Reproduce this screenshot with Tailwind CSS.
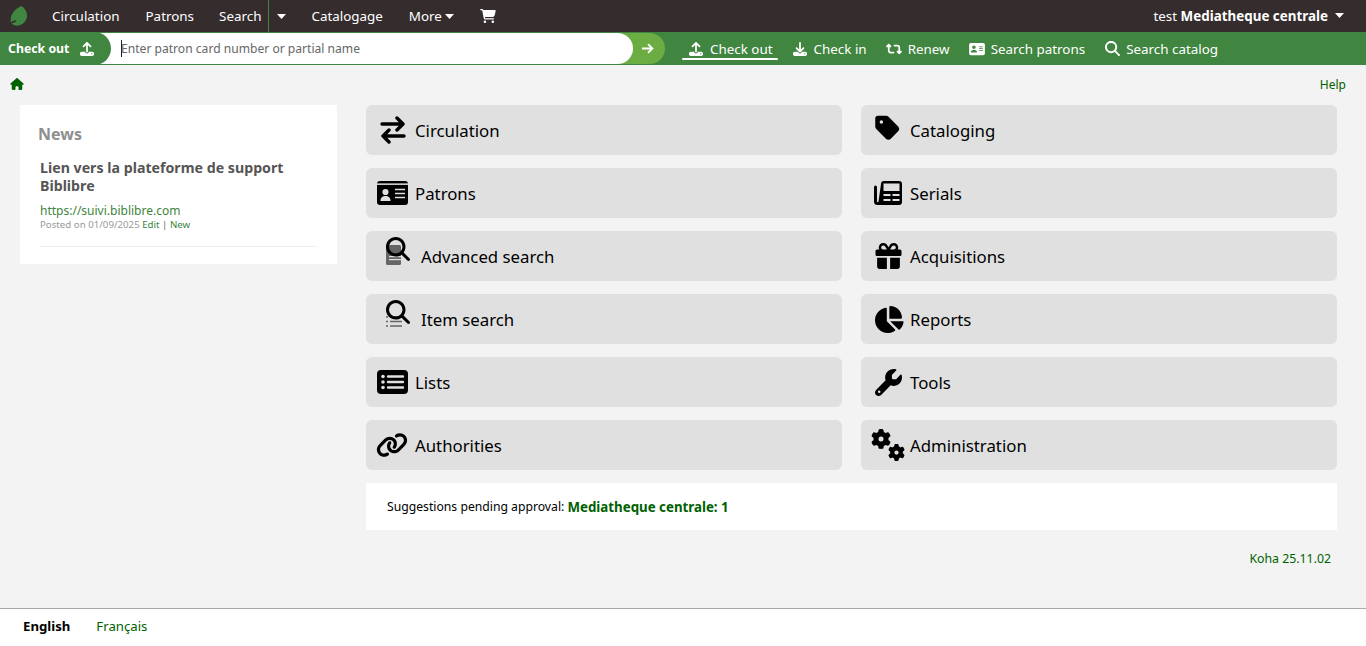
<!DOCTYPE html>
<html lang="en">
<head>
<meta charset="UTF-8">
<title>Koha staff interface</title>
<script src="https://cdn.jsdelivr.net/npm/@tailwindcss/browser@4"></script>
</head>
<body class="bg-[#f3f3f3] font-['Noto_Sans',sans-serif] text-[14px] text-black">
<div class="flex h-[646px] flex-col overflow-hidden">

  <!-- top nav -->
  <nav class="flex h-[32px] shrink-0 items-center bg-[#352c2e] text-[13.4px] text-white">
    <svg class="ml-[10px] h-[20px] w-[18px]" viewBox="0 0 18 20"><path fill="#408540" d="M11.500 0C15.500 2.500 17.500 6.500 17 10.500C16.500 15.500 12.500 19 8.500 19.500C5.500 20 3 19 1.500 17.500C3.500 17 5.500 16.500 6.500 14.500C5 14 3 15 1 16.500C-0.500 11 3 3.500 11.500 0Z"/></svg>
    <a class="ml-[24px]">Circulation</a>
    <a class="ml-[26px]">Patrons</a>
    <div class="ml-[25px] flex h-full items-center border-r border-[#408540] pr-[7px]">Search</div>
    <svg class="ml-[8px] h-[5px] w-[9px]" viewBox="0 0 9 5"><path fill="#fff" d="M0 0h9L4.500 5z"/></svg>
    <a class="ml-[25px]">Catalogage</a>
    <a class="ml-[26px]">More</a>
    <svg class="ml-[3px] h-[5px] w-[9px]" viewBox="0 0 9 5"><path fill="#fff" d="M0 0h9L4.500 5z"/></svg>
    <svg class="ml-[26px] h-[14px] w-[16px] fill-white" viewBox="0 0 576 512"><path d="M0 24C0 10.700 10.700 0 24 0H69.500c22 0 41.500 12.800 50.600 32h411c26.300 0 45.500 25 38.600 50.400l-41 152.300c-8.500 31.400-37 53.300-69.500 53.300H170.700l5.400 28.500c2.200 11.300 12.100 19.500 23.600 19.500H488c13.300 0 24 10.700 24 24s-10.700 24-24 24H199.700c-34.600 0-64.300-24.600-70.700-58.500L77.400 54.500c-.7-3.800-4-6.500-7.900-6.500H24C10.700 48 0 37.300 0 24zM128 464a48 48 0 1 1 96 0 48 48 0 1 1 -96 0zm336-48a48 48 0 1 1 0 96 48 48 0 1 1 0-96z"/></svg>
    <div class="ml-auto mr-[22px] flex items-center">
      <span>test <b class="font-bold">Mediatheque centrale</b></span>
      <svg class="ml-[7px] h-[5px] w-[9px]" viewBox="0 0 9 5"><path fill="#fff" d="M0 0h9L4.500 5z"/></svg>
    </div>
  </nav>

  <!-- check out bar -->
  <div class="flex h-[33px] shrink-0 items-center bg-[#408540] text-[13.4px] text-white">
    <div class="relative z-20 flex h-full w-[111px] items-center rounded-r-[17px] bg-[#408540] pl-[8px] text-[12.3px] font-bold">
      <span class="pt-[2px]">Check out</span>
      <svg class="ml-[11px] h-[14px] w-[14px] fill-white" viewBox="0 0 512 512"><path d="M288 109.300V352c0 17.700-14.300 32-32 32s-32-14.300-32-32V109.300l-73.400 73.400c-12.500 12.500-32.800 12.500-45.300 0s-12.500-32.800 0-45.300l128-128c12.500-12.500 32.800-12.500 45.300 0l128 128c12.500 12.500 12.500 32.800 0 45.300s-32.800 12.500-45.300 0L288 109.300zM64 352H192c0 35.300 28.700 64 64 64s64-28.700 64-64H448c35.300 0 64 28.700 64 64v32c0 35.300-28.700 64-64 64H64c-35.300 0-64-28.700-64-64V416c0-35.300 28.700-64 64-64zM432 456a24 24 0 1 0 0-48 24 24 0 1 0 0 48z"/></svg>
    </div>
    <div class="relative z-10 ml-[-17px] flex h-[31px] w-[539px] items-center rounded-r-[16px] bg-white pl-[27px]">
      <span class="h-[17px] w-px shrink-0 bg-[#222]"></span>
      <input class="ml-[-1px] w-full bg-transparent pt-[2px] text-[12.1px] text-[#555] outline-none placeholder:text-[#666]" placeholder="Enter patron card number or partial name">
    </div>
    <div class="ml-[-16px] flex h-[31px] w-[48px] items-center justify-end rounded-r-[16px] bg-[#6cad43] pr-[11px]">
      <svg class="h-[13px] w-[13px] stroke-white" viewBox="0 0 12 12" fill="none" stroke-width="1.700"><path d="M1 6h9.500M6.500 2l4 4-4 4"/></svg>
    </div>
    <div class="ml-[17px] flex h-full items-center pt-[1px]">
      <a class="relative flex h-full items-center pl-[7px] pr-[5px]">
        <svg class="mr-[7px] h-[14px] w-[14px] fill-white" viewBox="0 0 512 512"><path d="M288 109.300V352c0 17.700-14.300 32-32 32s-32-14.300-32-32V109.300l-73.400 73.400c-12.500 12.500-32.800 12.500-45.300 0s-12.500-32.800 0-45.300l128-128c12.500-12.500 32.800-12.500 45.300 0l128 128c12.500 12.500 12.500 32.800 0 45.300s-32.800 12.500-45.300 0L288 109.300zM64 352H192c0 35.300 28.700 64 64 64s64-28.700 64-64H448c35.300 0 64 28.700 64 64v32c0 35.300-28.700 64-64 64H64c-35.300 0-64-28.700-64-64V416c0-35.300 28.700-64 64-64zM432 456a24 24 0 1 0 0-48 24 24 0 1 0 0 48z"/></svg>
        Check out
        <span class="absolute bottom-[5px] left-0 right-0 h-[2px] rounded-full bg-white"></span>
      </a>
      <a class="ml-[15px] flex items-center">
        <svg class="mr-[7px] h-[14px] w-[14px] fill-white" viewBox="0 0 512 512"><path d="M288 32c0-17.700-14.300-32-32-32s-32 14.300-32 32V274.700l-73.400-73.400c-12.500-12.500-32.800-12.500-45.300 0s-12.500 32.800 0 45.300l128 128c12.500 12.500 32.800 12.500 45.300 0l128-128c12.500-12.500 12.500-32.800 0-45.300s-32.800-12.500-45.300 0L288 274.700V32zM64 352c-35.300 0-64 28.700-64 64v32c0 35.300 28.700 64 64 64H448c35.300 0 64-28.700 64-64V416c0-35.300-28.700-64-64-64H346.500l-45.300 45.300c-25 25-65.500 25-90.500 0L165.500 352H64zm368 56a24 24 0 1 1 0 48 24 24 0 1 1 0-48z"/></svg>
        Check in
      </a>
      <a class="ml-[19px] flex items-center">
        <svg class="mr-[6px] h-[14px] w-[16px] fill-white" viewBox="0 0 576 512"><path d="M272 416c17.700 0 32-14.300 32-32s-14.300-32-32-32H160c-17.700 0-32-14.300-32-32V192h32c12.900 0 24.600-7.800 29.600-19.800s2.200-25.700-6.900-34.900l-64-64c-12.500-12.500-32.800-12.500-45.300 0l-64 64c-9.200 9.200-11.900 22.900-6.900 34.900s16.600 19.800 29.600 19.800l32 0 0 128c0 53 43 96 96 96H272zM304 96c-17.700 0-32 14.300-32 32s14.300 32 32 32l112 0c17.700 0 32 14.300 32 32l0 128H416c-12.900 0-24.600 7.800-29.600 19.800s-2.200 25.700 6.900 34.900l64 64c12.500 12.500 32.800 12.500 45.300 0l64-64c9.200-9.200 11.900-22.900 6.900-34.900s-16.600-19.800-29.600-19.800l-32 0V192c0-53-43-96-96-96L304 96z"/></svg>
        Renew
      </a>
      <a class="ml-[19px] flex items-center">
        <svg class="mr-[6px] h-[14px] w-[16px] fill-white" viewBox="0 0 576 512"><path d="M64 32C28.700 32 0 60.700 0 96V416c0 35.300 28.700 64 64 64H512c35.300 0 64-28.700 64-64V96c0-35.300-28.700-64-64-64H64zm80 256h64c44.200 0 80 35.800 80 80c0 8.800-7.200 16-16 16H80c-8.800 0-16-7.200-16-16c0-44.200 35.800-80 80-80zm-32-96a64 64 0 1 1 128 0 64 64 0 1 1 -128 0zm256-32H496c8.800 0 16 7.200 16 16s-7.200 16-16 16H368c-8.800 0-16-7.200-16-16s7.200-16 16-16zm0 64H496c8.800 0 16 7.200 16 16s-7.200 16-16 16H368c-8.800 0-16-7.200-16-16s7.200-16 16-16zm0 64H496c8.800 0 16 7.200 16 16s-7.200 16-16 16H368c-8.800 0-16-7.200-16-16s7.200-16 16-16z"/></svg>
        Search patrons
      </a>
      <a class="ml-[20px] flex items-center">
        <svg class="mr-[6px] h-[15px] w-[15px] fill-white" viewBox="0 0 512 512"><path d="M416 208c0 45.900-14.900 88.300-40 122.700L502.600 457.400c12.500 12.500 12.500 32.800 0 45.300s-32.800 12.500-45.300 0L330.700 376c-34.400 25.200-76.800 40-122.700 40C93.100 416 0 322.900 0 208S93.100 0 208 0S416 93.100 416 208zM208 352a144 144 0 1 0 0-288 144 144 0 1 0 0 288z"/></svg>
        Search catalog
      </a>
    </div>
  </div>

  <!-- breadcrumb row -->
  <div class="flex h-[40px] shrink-0 items-center justify-between pl-[10px] pr-[20px]">
    <svg class="mb-[2px] h-[12px] w-[14px] fill-[#006100]" viewBox="0 0 576 512"><path d="M575.800 255.500c0 18-15 32.100-32 32.100h-32l.7 160.200c0 2.700-.2 5.400-.5 8.100V472c0 22.100-17.900 40-40 40H456c-1.100 0-2.200 0-3.300-.1c-1.400 .1-2.800 .1-4.200 .1H416 392c-22.100 0-40-17.900-40-40V448 384c0-17.700-14.300-32-32-32H256c-17.700 0-32 14.300-32 32v64 24c0 22.100-17.900 40-40 40H160 128.100c-1.500 0-3-.1-4.500-.2c-1.200 .1-2.400 .2-3.600 .2H104c-22.100 0-40-17.900-40-40V360c0-.9 0-1.900 .1-2.800V287.600H32c-18 0-32-14-32-32.100c0-9 3-17 10-24L266.400 8c7-7 15-8 22-8s15 2 21 7L564.800 231.500c8 7 12 15 11 24z"/></svg>
    <a class="text-[12px] text-[#006100]">Help</a>
  </div>

  <!-- main -->
  <main class="flex flex-1 pl-[20px]">
    <section class="h-[159px] w-[317px] shrink-0 bg-white px-[18px] pt-[18px]">
      <h3 class="text-[16px] font-bold leading-[22px] text-[#8f8f8f]">News</h3>
      <div class="mx-[2px] mt-[14px] border-b border-[#eee] pb-[15px]">
        <h4 class="text-[14.2px] font-bold leading-[18px] text-[#555]">Lien vers la plateforme de support Biblibre</h4>
        <a class="mt-[7px] block text-[12px] leading-[17px] text-[#408540]">https://suivi.biblibre.com</a>
        <p class="text-[9.7px] leading-[12px] text-[#999]">Posted on 01/09/2025 <a class="text-[#408540]">Edit</a> <span class="text-[#666]">|</span> <a class="text-[#408540]">New</a></p>
      </div>
    </section>

    <div class="ml-[29px] w-[971px]">
      <div class="grid grid-cols-2 gap-x-[19px] gap-y-[13px] text-[16.8px] leading-none">
        <a class="flex h-[50px] items-center rounded-[6px] bg-[#e0e0e0]">
          <svg class="ml-[14px] mr-[9px] mt-[-1px] h-[28px] w-[26px]" viewBox="0 0 26 28" fill="none" stroke="#000" stroke-width="3.400" stroke-linecap="round" stroke-linejoin="round"><path d="M2 8h21M17 2l6 6-6 6M24 20H3M9 14l-6 6 6 6"/></svg>
          <span class="pt-[2px]">Circulation</span>
        </a>
        <a class="flex h-[50px] items-center rounded-[6px] bg-[#e0e0e0]">
          <svg class="ml-[14px] mr-[10px] mt-[-4px] h-[28px] w-[25px] fill-black" viewBox="0 0 448 512"><path d="M0 80V229.500c0 17 6.700 33.300 18.700 45.300l176 176c25 25 65.500 25 90.500 0L418.700 317.300c25-25 25-65.500 0-90.500l-176-176c-12-12-28.300-18.700-45.300-18.700H48C21.500 32 0 53.500 0 80zm112 32a32 32 0 1 1 0 64 32 32 0 1 1 0-64z"/></svg>
          <span class="pt-[2px]">Cataloging</span>
        </a>
        <a class="flex h-[50px] items-center rounded-[6px] bg-[#e0e0e0]">
          <svg class="ml-[11px] mr-[7px] h-[24px] w-[31px]" viewBox="0 0 31 24"><rect width="31" height="24" rx="3" fill="#000"/><rect y="2.400" width="31" height="1.500" fill="#e0e0e0"/><circle cx="8.500" cy="11" r="3.100" fill="#e0e0e0"/><path d="M3.500 20c0-3.500 1.800-5 5-5s5 1.500 5 5z" fill="#e0e0e0"/><path d="M18 8.500h10M18 12.500h10M18 16.500h10" stroke="#e0e0e0" stroke-width="1.700"/></svg>
          <span class="pt-[2px]">Patrons</span>
        </a>
        <a class="flex h-[50px] items-center rounded-[6px] bg-[#e0e0e0]">
          <svg class="ml-[13px] mr-[8px] h-[24px] w-[28px]" viewBox="0 0 28 24"><path fill="#000" d="M7 3a3 3 0 0 1 3-3h15a3 3 0 0 1 3 3v18a3 3 0 0 1-3 3H3.500A3.500 3.500 0 0 1 0 20.500V6a1.500 1.500 0 0 1 3 0v14.500a.75.750 0 0 0 1.500 0Z"/><path fill="#e0e0e0" d="M9.500 2.500h16v7.500h-16zM9.500 13h7v2h-7zM9.500 18h7v2h-7zM18.500 13h7v2h-7zM18.500 18h7v2h-7z"/></svg>
          <span class="pt-[2px]">Serials</span>
        </a>
        <a class="flex h-[50px] items-center rounded-[6px] bg-[#e0e0e0]">
          <span class="relative ml-[20px] mr-[9px] mt-[-8px] h-[30px] w-[26px]">
            <svg class="absolute left-0 top-[8px] h-[20px] w-[15px]" viewBox="0 0 15 20"><rect width="15" height="20" rx="1.500" fill="#666"/><rect x="3" y="11" width="12" height="1.200" fill="#e0e0e0"/><rect x="3" y="14" width="12" height="1.200" fill="#e0e0e0"/></svg>
            <svg class="absolute left-0 top-0 h-[24px] w-[24px] fill-black" viewBox="0 0 512 512"><path d="M416 208c0 45.900-14.900 88.300-40 122.700L502.600 457.400c12.500 12.500 12.500 32.800 0 45.300s-32.800 12.500-45.300 0L330.700 376c-34.400 25.200-76.800 40-122.700 40C93.100 416 0 322.900 0 208S93.100 0 208 0S416 93.100 416 208zM208 352a144 144 0 1 0 0-288 144 144 0 1 0 0 288z"/></svg>
          </span>
          <span class="pt-[2px]">Advanced search</span>
        </a>
        <a class="flex h-[50px] items-center rounded-[6px] bg-[#e0e0e0]">
          <svg class="ml-[14px] mr-[8px] h-[26px] w-[27px] fill-black" viewBox="0 0 512 512"><path d="M190.500 68.800L225.300 128H224 152c-22.100 0-40-17.900-40-40s17.900-40 40-40h2.200c14.900 0 28.800 7.900 36.300 20.800zM64 88c0 14.400 3.500 28 9.600 40H32c-17.700 0-32 14.300-32 32v64c0 17.700 14.300 32 32 32H480c17.700 0 32-14.300 32-32V160c0-17.700-14.300-32-32-32H438.400c6.100-12 9.600-25.600 9.600-40c0-48.600-39.400-88-88-88h-2.200c-31.900 0-61.500 16.900-77.700 44.400L256 85.500l-24.100-41C215.700 16.900 186.100 0 154.200 0H152C103.400 0 64 39.400 64 88zm336 0c0 22.100-17.900 40-40 40H288h-1.300l34.800-59.200C329.100 55.900 342.900 48 357.800 48H360c22.100 0 40 17.900 40 40zM32 288V464c0 26.500 21.500 48 48 48H224V288H32zM288 512H432c26.500 0 48-21.500 48-48V288H288V512z"/></svg>
          <span class="pt-[2px]">Acquisitions</span>
        </a>
        <a class="flex h-[50px] items-center rounded-[6px] bg-[#e0e0e0]">
          <span class="relative ml-[20px] mr-[9px] mt-[-8px] h-[30px] w-[26px]">
            <svg class="absolute left-0 top-[14px] h-[14px] w-[16px]" viewBox="0 0 16 14"><path d="M0 3h2M4 3h12M0 7.500h2M4 7.500h12M0 12h2M4 12h12" stroke="#666" stroke-width="1.600"/></svg>
            <svg class="absolute left-0 top-0 h-[24px] w-[24px] fill-black" viewBox="0 0 512 512"><path d="M416 208c0 45.900-14.900 88.300-40 122.700L502.600 457.400c12.500 12.500 12.500 32.800 0 45.300s-32.800 12.500-45.300 0L330.700 376c-34.400 25.200-76.800 40-122.700 40C93.100 416 0 322.900 0 208S93.100 0 208 0S416 93.100 416 208zM208 352a144 144 0 1 0 0-288 144 144 0 1 0 0 288z"/></svg>
          </span>
          <span class="pt-[2px]">Item search</span>
        </a>
        <a class="flex h-[50px] items-center rounded-[6px] bg-[#e0e0e0]">
          <svg class="ml-[12px] mr-[6px] h-[27px] w-[31px] fill-black" viewBox="0 0 576 512"><path d="M304 240V16.600c0-9 7-16.600 16-16.600C443.700 0 544 100.300 544 224c0 9-7.600 16-16.600 16H304zM32 272C32 150.700 122.100 50.300 239 34.300c9.200-1.300 17 6.100 17 15.400V288L412.500 444.500c6.700 6.700 6.200 17.700-1.500 23.100C371.800 495.600 323.800 512 272 512C139.500 512 32 404.600 32 272zm526.400 16c9.300 0 16.600 7.800 15.400 17c-7.700 55.900-34.600 105.600-73.900 142.300c-6 5.600-15.400 5.200-21.200-.7L320 288H558.400z"/></svg>
          <span class="pt-[2px]">Reports</span>
        </a>
        <a class="flex h-[50px] items-center rounded-[6px] bg-[#e0e0e0]">
          <svg class="ml-[11px] mr-[7px] h-[24px] w-[31px]" viewBox="0 0 31 24"><rect width="31" height="24" rx="4" fill="#000"/><path d="M11 6.500h15M11 12h15M11 17.500h15" stroke="#e0e0e0" stroke-width="2.400" stroke-linecap="round"/><circle cx="6" cy="6.500" r="1.800" fill="#e0e0e0"/><circle cx="6" cy="12" r="1.800" fill="#e0e0e0"/><circle cx="6" cy="17.500" r="1.800" fill="#e0e0e0"/></svg>
          <span class="pt-[2px]">Lists</span>
        </a>
        <a class="flex h-[50px] items-center rounded-[6px] bg-[#e0e0e0]">
          <svg class="ml-[14px] mr-[8px] h-[27px] w-[27px] fill-black" viewBox="0 0 512 512"><path d="M352 320c88.400 0 160-71.600 160-160c0-15.300-2.200-30.100-6.200-44.200c-3.100-10.800-16.400-13.200-24.300-5.300l-76.800 76.800c-3 3-7.100 4.700-11.300 4.700H336c-8.800 0-16-7.200-16-16V118.600c0-4.200 1.700-8.300 4.700-11.300l76.800-76.800c7.900-7.900 5.400-21.200-5.300-24.300C382.100 2.200 367.300 0 352 0C263.600 0 192 71.600 192 160c0 19.100 3.400 37.500 9.500 54.500L19.900 396.100C7.200 408.800 0 426.100 0 444.100C0 481.600 30.400 512 67.900 512c18 0 35.300-7.200 48-19.900L297.500 310.500c17 6.200 35.400 9.500 54.500 9.500zM80 408a24 24 0 1 1 0 48 24 24 0 1 1 0-48z"/></svg>
          <span class="pt-[2px]">Tools</span>
        </a>
        <a class="flex h-[50px] items-center rounded-[6px] bg-[#e0e0e0]">
          <svg class="ml-[10px] mr-[7px] h-[26px] w-[32px] fill-black" viewBox="0 0 640 512"><path d="M579.800 267.700c56.500-56.500 56.500-148 0-204.500c-50-50-128.800-56.500-186.300-15.400l-1.600 1.100c-14.400 10.300-17.700 30.300-7.400 44.600s30.300 17.700 44.600 7.400l1.600-1.100c32.100-22.900 76-19.300 103.800 8.600c31.500 31.500 31.500 82.500 0 114L422.300 334.800c-31.500 31.500-82.500 31.500-114 0c-27.900-27.900-31.500-71.800-8.600-103.800l1.100-1.600c10.300-14.400 6.900-34.400-7.400-44.600s-34.400-6.900-44.600 7.400l-1.100 1.600C206.500 251.200 213 330 263 380c56.500 56.500 148 56.500 204.500 0L579.800 267.700zM60.200 244.300c-56.500 56.500-56.500 148 0 204.500c50 50 128.800 56.500 186.300 15.400l1.600-1.100c14.400-10.300 17.700-30.300 7.400-44.600s-30.300-17.700-44.600-7.400l-1.600 1.100c-32.100 22.900-76 19.300-103.800-8.600C74 372 74 321 105.500 289.500L217.700 177.200c31.500-31.500 82.500-31.500 114 0c27.900 27.900 31.500 71.800 8.600 103.900l-1.100 1.600c-10.300 14.400-6.900 34.400 7.400 44.600s34.400 6.900 44.600-7.400l1.100-1.600C433.500 260.800 427 182 377 132c-56.500-56.500-148-56.500-204.500 0L60.200 244.300z"/></svg>
          <span class="pt-[2px]">Authorities</span>
        </a>
        <a class="flex h-[50px] items-center rounded-[6px] bg-[#e0e0e0]">
          <span class="relative ml-[10px] mr-[5px] h-[34px] w-[34px]">
            <svg class="absolute left-0 top-[1px] h-[20px] w-[20px] fill-black" viewBox="0 0 512 512"><path d="M495.900 166.600c3.200 8.700 .5 18.400-6.400 24.600l-43.300 39.400c1.100 8.300 1.700 16.800 1.700 25.400s-.6 17.100-1.700 25.400l43.300 39.400c6.900 6.200 9.600 15.900 6.400 24.600c-4.400 11.900-9.700 23.300-15.800 34.300l-4.700 8.100c-6.600 11-14 21.400-22.100 31.200c-5.900 7.200-15.700 9.600-24.500 6.800l-55.700-17.700c-13.400 10.300-28.200 18.900-44 25.400l-12.500 57.100c-2 9.100-9 16.300-18.200 17.800c-13.800 2.300-28 3.500-42.500 3.500s-28.700-1.200-42.500-3.500c-9.200-1.500-16.200-8.700-18.200-17.800l-12.500-57.100c-15.800-6.500-30.600-15.100-44-25.400L83.100 425.900c-8.800 2.800-18.600 .3-24.500-6.800c-8.100-9.800-15.500-20.200-22.100-31.200l-4.700-8.100c-6.100-11-11.400-22.400-15.800-34.300c-3.200-8.700-.5-18.400 6.400-24.600l43.300-39.400C64.600 273.100 64 264.600 64 256s.6-17.100 1.700-25.400L22.400 191.200c-6.900-6.200-9.600-15.900-6.400-24.600c4.400-11.900 9.700-23.300 15.800-34.300l4.700-8.100c6.600-11 14-21.400 22.100-31.200c5.900-7.200 15.700-9.600 24.500-6.800l55.700 17.700c13.400-10.300 28.200-18.900 44-25.400l12.500-57.100c2-9.100 9-16.300 18.200-17.800C227.300 1.200 241.500 0 256 0s28.700 1.200 42.500 3.500c9.200 1.500 16.200 8.700 18.200 17.800l12.500 57.100c15.800 6.500 30.600 15.100 44 25.400l55.700-17.700c8.800-2.800 18.600-.3 24.500 6.800c8.100 9.800 15.500 20.200 22.100 31.200l4.700 8.100c6.100 11 11.400 22.400 15.800 34.300zM256 320a64 64 0 1 0 0-128 64 64 0 1 0 0 128z"/></svg>
            <svg class="absolute left-[17px] top-[16px] h-[17px] w-[17px] fill-black" viewBox="0 0 512 512"><path d="M495.900 166.600c3.200 8.700 .5 18.400-6.400 24.600l-43.300 39.400c1.100 8.300 1.700 16.800 1.700 25.400s-.6 17.100-1.700 25.400l43.300 39.400c6.900 6.200 9.600 15.900 6.400 24.600c-4.400 11.900-9.700 23.300-15.800 34.300l-4.700 8.100c-6.600 11-14 21.400-22.100 31.200c-5.900 7.200-15.700 9.600-24.500 6.800l-55.700-17.700c-13.400 10.300-28.200 18.900-44 25.400l-12.500 57.100c-2 9.100-9 16.300-18.200 17.800c-13.800 2.300-28 3.500-42.500 3.500s-28.700-1.200-42.500-3.500c-9.200-1.500-16.200-8.700-18.200-17.800l-12.500-57.100c-15.800-6.500-30.600-15.100-44-25.400L83.100 425.900c-8.800 2.800-18.600 .3-24.500-6.800c-8.100-9.800-15.500-20.200-22.100-31.200l-4.700-8.100c-6.100-11-11.400-22.400-15.800-34.300c-3.200-8.700-.5-18.400 6.400-24.600l43.300-39.400C64.600 273.100 64 264.600 64 256s.6-17.100 1.700-25.400L22.400 191.200c-6.900-6.200-9.600-15.900-6.400-24.600c4.400-11.900 9.700-23.300 15.800-34.300l4.700-8.100c6.600-11 14-21.400 22.100-31.200c5.900-7.200 15.700-9.600 24.500-6.800l55.700 17.700c13.400-10.300 28.200-18.900 44-25.400l12.500-57.100c2-9.100 9-16.300 18.200-17.800C227.300 1.200 241.500 0 256 0s28.700 1.200 42.500 3.500c9.200 1.500 16.200 8.700 18.200 17.800l12.500 57.100c15.800 6.500 30.600 15.100 44 25.400l55.700-17.700c8.800-2.800 18.600-.3 24.500 6.800c8.100 9.800 15.500 20.200 22.100 31.200l4.700 8.100c6.100 11 11.400 22.400 15.800 34.300zM256 320a64 64 0 1 0 0-128 64 64 0 1 0 0 128z"/></svg>
          </span>
          <span class="pt-[2px]">Administration</span>
        </a>
      </div>

      <div class="mt-[13px] flex h-[47px] items-center bg-white pl-[21px] pt-[2px] text-[12.2px]">
        Suggestions pending approval:&nbsp;<a class="text-[13.3px] font-bold text-[#006100]">Mediatheque centrale: 1</a>
      </div>
      <div class="mt-[20px] pr-[6px] text-right text-[12.3px] leading-[17px] text-[#006100]">Koha 25.11.02</div>
    </div>
  </main>

  <!-- language footer -->
  <footer class="flex h-[38px] shrink-0 items-center border-t border-[#aaa] bg-white pb-[2px] pl-[23px] text-[13.2px]">
    <span class="font-bold">English</span>
    <a class="ml-[26px] text-[#006100]">Français</a>
  </footer>
</div>
</body>
</html>
